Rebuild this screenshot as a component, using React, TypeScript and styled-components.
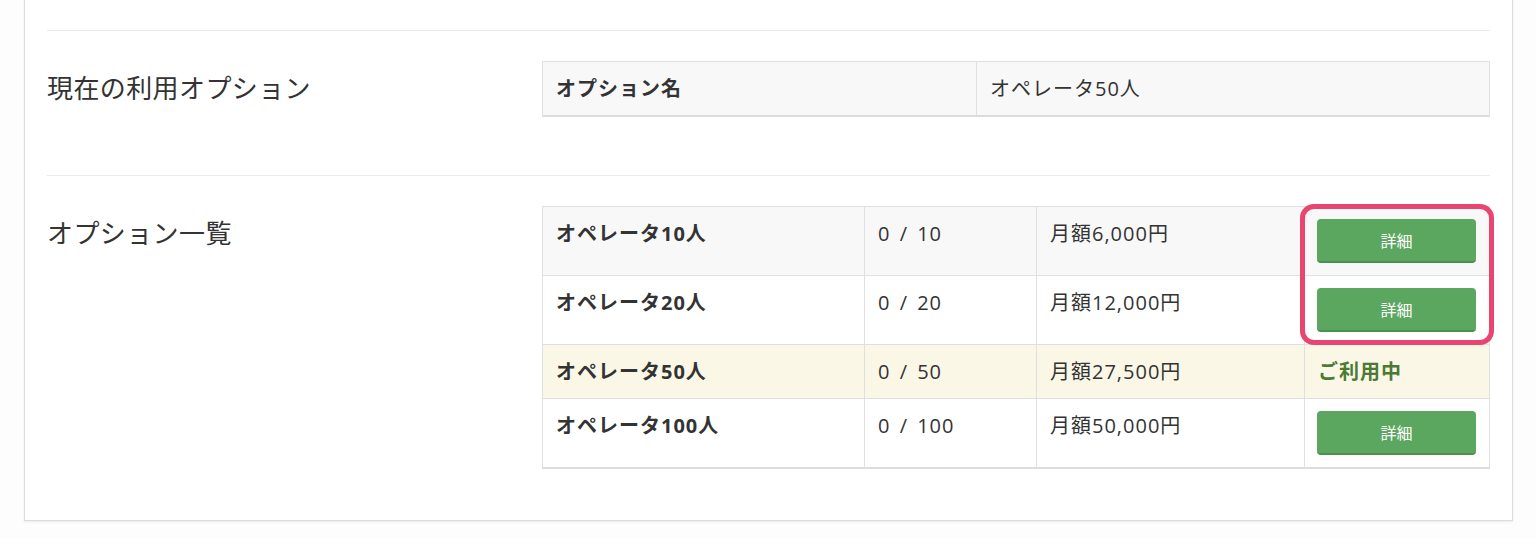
import React from 'react';
import styled, { createGlobalStyle } from 'styled-components';

const GlobalStyle = createGlobalStyle`
  body {
    margin: 0;
    background: #fdfdfd;
    font-family: "Open Sans", "Noto Sans CJK JP", sans-serif;
    color: #333;
  }
`;

interface OptionRow {
  name: string;
  usage: string;
  price: string;
  isCurrent?: boolean;
}

const OPTIONS: OptionRow[] = [
  { name: 'オペレータ10人', usage: '0 / 10', price: '月額6,000円' },
  { name: 'オペレータ20人', usage: '0 / 20', price: '月額12,000円' },
  { name: 'オペレータ50人', usage: '0 / 50', price: '月額27,500円', isCurrent: true },
  { name: 'オペレータ100人', usage: '0 / 100', price: '月額50,000円' },
];

const App = () => (
  <>
    <GlobalStyle />
    <SPage>
      <SCard>
        <SSection>
          <SLabel>現在の利用オプション</SLabel>
          <STable>
            <colgroup>
              <col style={{ width: 434 }} />
              <col />
            </colgroup>
            <tbody>
              <SRow variant="striped">
                <SHeadCell>オプション名</SHeadCell>
                <SCell>オペレータ50人</SCell>
              </SRow>
            </tbody>
          </STable>
        </SSection>

        <SSection isLast>
          <SLabel>オプション一覧</SLabel>
          <STableWrapper>
            <STable>
              <colgroup>
                <col style={{ width: 322 }} />
                <col style={{ width: 172 }} />
                <col style={{ width: 268 }} />
                <col />
              </colgroup>
              <tbody>
                {OPTIONS.map((option, index) => (
                  <SRow
                    key={option.name}
                    variant={
                      option.isCurrent
                        ? 'current'
                        : index % 2 === 0
                        ? 'striped'
                        : 'plain'
                    }
                  >
                    <SHeadCell>{option.name}</SHeadCell>
                    <SUsageCell>{option.usage}</SUsageCell>
                    <SCell>{option.price}</SCell>
                    {option.isCurrent ? (
                      <SCell>
                        <SCurrent>ご利用中</SCurrent>
                      </SCell>
                    ) : (
                      <SButtonCell>
                        <SButton type="button">詳細</SButton>
                      </SButtonCell>
                    )}
                  </SRow>
                ))}
              </tbody>
            </STable>
            <SHighlight />
          </STableWrapper>
        </SSection>
      </SCard>
    </SPage>
  </>
);

const SPage = styled.div`
  padding: 0 23px 18px 24px;
`;

const SCard = styled.div`
  background: #fff;
  border: 1px solid #dcdcdc;
  border-top: none;
  box-shadow: 0 1px 2px rgba(0, 0, 0, 0.08);
  padding: 30px 22px 0;
`;

const SSection = styled.div<{ isLast?: boolean }>`
  display: grid;
  grid-template-columns: 495px 1fr;
  align-items: start;
  border-top: 1px solid #ebebeb;
  padding: 30px 0 ${({ isLast }) => (isLast ? '51px' : '58px')};
`;

const SLabel = styled.div`
  padding-top: 12px;
  font-size: 26px;
  line-height: 30px;
  color: #333;
  letter-spacing: 0.4px;
`;

const STableWrapper = styled.div`
  position: relative;
`;

const STable = styled.table`
  width: 100%;
  border-collapse: collapse;
  table-layout: fixed;
  border: 1px solid #dcdcdc;
  border-bottom-width: 2px;
`;

const SRow = styled.tr<{ variant: 'plain' | 'striped' | 'current' }>`
  background: ${({ variant }) =>
    variant === 'current'
      ? '#faf7e6'
      : variant === 'striped'
      ? '#f8f8f8'
      : '#fff'};
`;

const SCell = styled.td`
  border: 1px solid #e0e0e0;
  padding: 15px 13px;
  font-size: 20px;
  line-height: 23px;
  letter-spacing: 1px;
  vertical-align: top;
  color: #333;
  white-space: nowrap;
`;

const SHeadCell = styled(SCell)`
  font-weight: 700;
`;

const SUsageCell = styled(SCell)`
  word-spacing: 3px;
`;

const SButtonCell = styled(SCell)`
  padding: 12px 13px 12px 12px;
`;

const SCurrent = styled.span`
  font-weight: 700;
  color: #4a7a35;
`;

const SButton = styled.button`
  display: block;
  width: 100%;
  height: 44px;
  border: none;
  border-bottom: 2px solid #4a9050;
  border-radius: 4px;
  background: #5ca760;
  color: #fff;
  font-family: "Open Sans", "Noto Sans CJK JP", sans-serif;
  font-size: 16px;
  letter-spacing: 0;
  cursor: pointer;
`;

const SHighlight = styled.div`
  position: absolute;
  left: 758px;
  top: -2px;
  width: 194px;
  height: 141px;
  box-sizing: border-box;
  border: 5px solid #e8466f;
  border-radius: 14px;
  pointer-events: none;
`;

export default App;
